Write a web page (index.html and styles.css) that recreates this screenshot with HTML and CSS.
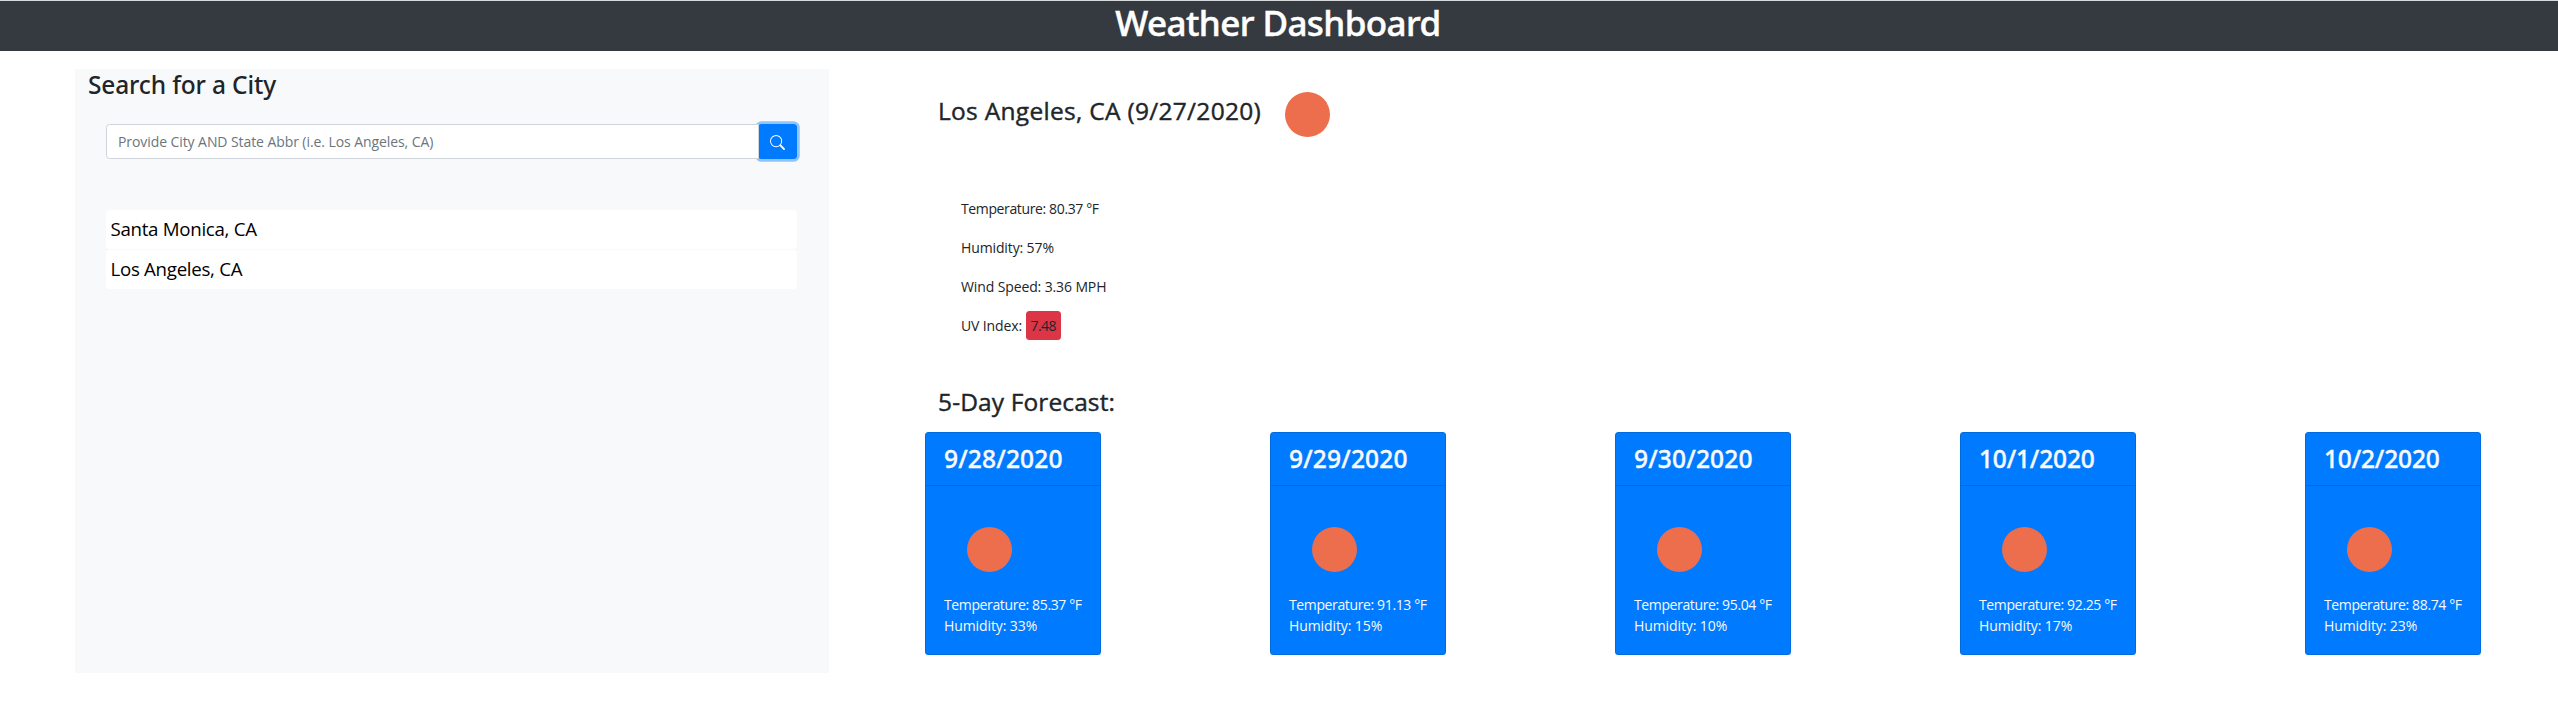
FILE: index.html
```html
<!DOCTYPE html>
<html lang="en">
<head>
<meta charset="utf-8">
<title>Weather Dashboard</title>
<link rel="stylesheet" href="styles.css">
</head>
<body>
<header class="topbar"><h1>Weather Dashboard</h1></header>
<main class="layout">
  <aside class="search">
    <h3 class="search-title">Search for a City</h3>
    <div class="search-group">
      <input class="search-input" type="text" placeholder="Provide City AND State Abbr (i.e. Los Angeles, CA)">
      <button class="search-btn" aria-label="Search">
        <svg width="15" height="15" viewBox="0 0 16 16" fill="currentColor"><path fill-rule="evenodd" d="M10.442 10.442a1 1 0 0 1 1.415 0l3.85 3.85a1 1 0 0 1-1.414 1.415l-3.85-3.85a1 1 0 0 1 0-1.415z"/><path fill-rule="evenodd" d="M6.5 12a5.5 5.5 0 1 0 0-11 5.5 5.5 0 0 0 0 11zM13 6.5a6.5 6.5 0 1 1-13 0 6.5 6.5 0 0 1 13 0z"/></svg>
      </button>
    </div>
    <ul class="history">
      <li>Santa Monica, CA</li>
      <li>Los Angeles, CA</li>
    </ul>
  </aside>
  <section class="weather">
    <div class="current-head">
      <h3 class="heading city">Los Angeles, CA (9/27/2020)</h3>
      <span class="sun"></span>
    </div>
    <div class="current">
      <p class="temp">Temperature: 80.37 °F</p>
      <p>Humidity: 57%</p>
      <p>Wind Speed: 3.36 MPH</p>
      <p>UV Index: <span class="uv">7.48</span></p>
    </div>
    <h3 class="heading forecast-title">5-Day Forecast:</h3>
    <div class="forecast">
      <article class="card"><h3>9/28/2020</h3><div class="card-body"><span class="sun"></span><p class="temp">Temperature: 85.37 °F</p><p>Humidity: 33%</p></div></article>
      <article class="card"><h3>9/29/2020</h3><div class="card-body"><span class="sun"></span><p class="temp">Temperature: 91.13 °F</p><p>Humidity: 15%</p></div></article>
      <article class="card"><h3>9/30/2020</h3><div class="card-body"><span class="sun"></span><p class="temp">Temperature: 95.04 °F</p><p>Humidity: 10%</p></div></article>
      <article class="card"><h3 class="october">10/1/2020</h3><div class="card-body"><span class="sun"></span><p class="temp">Temperature: 92.25 °F</p><p>Humidity: 17%</p></div></article>
      <article class="card"><h3 class="october">10/2/2020</h3><div class="card-body"><span class="sun"></span><p class="temp">Temperature: 88.74 °F</p><p>Humidity: 23%</p></div></article>
    </div>
  </section>
</main>
</body>
</html>
```
FILE: styles.css
```css
* { box-sizing: border-box; }

body {
  margin: 0;
  background: #fff;
  color: #212529;
  font: 14px/21px "Open Sans", "Noto Sans", sans-serif;
}

h1, h3, p, ul { margin: 0; padding: 0; }

.topbar {
  height: 51px;
  padding: 1px 2px 0 0;
  border-top: 1px solid #d6d9db;
  background: #343a40;
  color: #fff;
  text-align: center;
}

.topbar h1 {
  font: 500 35px/42px "Noto Sans", sans-serif;
  letter-spacing: -0.58px;
  -webkit-text-stroke: 0.5px currentColor;
}

.layout {
  display: flex;
  padding: 18px 77px 0 75px;
}

/* Search column */
.search {
  width: 754px;
  height: 604px;
  padding: 0 32px 0 31px;
  background: #f8f9fb;
}

.search-title {
  margin-left: -18px;
  padding-top: 1px;
  font: 500 24.5px/30px "Noto Sans", sans-serif;
  letter-spacing: -0.15px;
}

.search-group {
  display: flex;
  height: 35px;
  margin-top: 24px;
}

.search-input {
  position: relative;
  z-index: 1;
  flex: 1;
  padding: 0 11px;
  border: 1px solid #ced4da;
  border-radius: 3.5px 0 0 3.5px;
  background: #fff;
  font: inherit;
  letter-spacing: -0.08px;
}

.search-input::placeholder { color: #6c757d; opacity: 1; }

.search-btn {
  display: flex;
  align-items: center;
  justify-content: center;
  width: 39px;
  margin-left: -1px;
  padding: 2px 0 0;
  border: 0;
  border-radius: 3.5px;
  background: #007bff;
  box-shadow: 0 0 0 2.8px rgba(0, 123, 255, 0.42);
  color: #fff;
}

.history {
  display: grid;
  gap: 1px;
  margin-top: 51px;
  list-style: none;
}

.history li {
  height: 39px;
  padding: 0 4.5px;
  border-radius: 3.5px;
  background: #fff;
  color: #000;
  font-size: 18.7px;
  line-height: 38px;
  letter-spacing: -0.29px;
}

/* Weather column */
.weather {
  flex: 1;
  margin-left: 96px;
  padding-top: 23px;
}

.heading {
  font-size: 24.5px;
  font-weight: 400;
  line-height: 29px;
  -webkit-text-stroke: 0.4px currentColor;
}

.current-head {
  display: flex;
  align-items: center;
  height: 45px;
  padding-left: 13px;
}

.city {
  width: 347px;
  margin-bottom: 8px;
  letter-spacing: 0.29px;
}

.sun {
  display: block;
  width: 45px;
  height: 45px;
  border-radius: 50%;
  background: #ec6e4c;
}

.current {
  display: grid;
  gap: 18px;
  margin: 61px 0 51px;
  padding-left: 36px;
  letter-spacing: -0.12px;
}

.temp { letter-spacing: -0.37px; }

.uv {
  padding: 5px;
  border-radius: 3.5px;
  background: #dc3545;
  letter-spacing: -0.6px;
}

.forecast-title {
  padding-left: 13px;
  letter-spacing: 0.12px;
}

.forecast {
  display: flex;
  justify-content: space-between;
  margin-top: 16px;
}

.card {
  width: 176px;
  height: 223px;
  border: 1px solid rgba(0, 0, 0, 0.125);
  border-radius: 3.5px;
  background: #007bff;
  color: #f8f9fa;
}

.card h3 {
  height: 53px;
  padding: 11px 10px 0 18px;
  border-bottom: 1px solid rgba(0, 0, 0, 0.125);
  font: 500 24.5px/30px "Noto Sans", sans-serif;
  letter-spacing: 0.2px;
  -webkit-text-stroke: 0.4px currentColor;
}

.card .october { letter-spacing: -0.15px; }

.card-body {
  padding: 41px 17px 0 18px;
  letter-spacing: -0.1px;
  white-space: nowrap;
}

.card-body .sun { margin: 0 0 22px 23px; }
```
